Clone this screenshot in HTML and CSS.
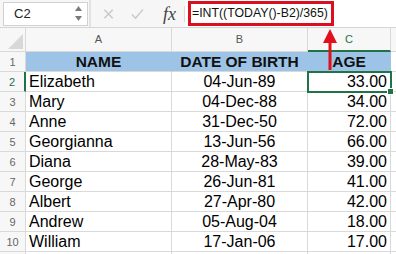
FILE: index.html
```html
<!DOCTYPE html>
<html lang="en">
<head>
  <meta charset="UTF-8" />
  <title>Age formula</title>
  <link rel="stylesheet" href="styles.css">
</head>
<body>
  <div class="app">
    <div class="toolbar">
      <div class="namebox">
        <span class="cellref">C2</span>
        <svg class="spin" width="9" height="17" viewBox="0 0 9 17">
          <path d="M4.5 1 L8 6 L1 6 Z" fill="#7a7a7a"/>
          <path d="M4.5 16 L8 11 L1 11 Z" fill="#7a7a7a"/>
        </svg>
      </div>
      <div class="splitter"></div>
      <div class="tools">
        <svg class="tool" width="12" height="12" viewBox="0 0 12 12">
          <path d="M1.5 1.5 L10.5 10.5 M10.5 1.5 L1.5 10.5" stroke="#c9c9c9" stroke-width="1.6" fill="none"/>
        </svg>
        <svg class="tool" width="14" height="12" viewBox="0 0 14 12">
          <path d="M1 6.5 L5 10.5 L13 1" stroke="#c9c9c9" stroke-width="1.6" fill="none"/>
        </svg>
        <span class="fx">fx</span>
      </div>
      <div class="formula">
        <span class="formula-box">=INT((TODAY()-B2)/365)</span>
      </div>
    </div>

    <div class="sheet">
      <div class="corner"><span class="tri"></span></div>
      <div class="colhead">A</div>
      <div class="colhead">B</div>
      <div class="colhead active">C</div>
      <div class="colhead"></div>

      <div class="rowhead">1</div>
      <div class="cell title">NAME</div>
      <div class="cell title">DATE OF BIRTH</div>
      <div class="cell title">AGE</div>
      <div class="cell"></div>

      <div class="rowhead active">2</div>
      <div class="cell">Elizabeth</div>
      <div class="cell date">04-Jun-89</div>
      <div class="cell num selected">33.00</div>
      <div class="cell"></div>

      <div class="rowhead">3</div>
      <div class="cell">Mary</div>
      <div class="cell date">04-Dec-88</div>
      <div class="cell num">34.00</div>
      <div class="cell"></div>

      <div class="rowhead">4</div>
      <div class="cell">Anne</div>
      <div class="cell date">31-Dec-50</div>
      <div class="cell num">72.00</div>
      <div class="cell"></div>

      <div class="rowhead">5</div>
      <div class="cell">Georgianna</div>
      <div class="cell date">13-Jun-56</div>
      <div class="cell num">66.00</div>
      <div class="cell"></div>

      <div class="rowhead">6</div>
      <div class="cell">Diana</div>
      <div class="cell date">28-May-83</div>
      <div class="cell num">39.00</div>
      <div class="cell"></div>

      <div class="rowhead">7</div>
      <div class="cell">George</div>
      <div class="cell date">26-Jun-81</div>
      <div class="cell num">41.00</div>
      <div class="cell"></div>

      <div class="rowhead">8</div>
      <div class="cell">Albert</div>
      <div class="cell date">27-Apr-80</div>
      <div class="cell num">42.00</div>
      <div class="cell"></div>

      <div class="rowhead">9</div>
      <div class="cell">Andrew</div>
      <div class="cell date">05-Aug-04</div>
      <div class="cell num">18.00</div>
      <div class="cell"></div>

      <div class="rowhead">10</div>
      <div class="cell">William</div>
      <div class="cell date">17-Jan-06</div>
      <div class="cell num">17.00</div>
      <div class="cell"></div>

      <div class="rowhead"></div>
      <div class="cell"></div>
      <div class="cell"></div>
      <div class="cell"></div>
      <div class="cell"></div>
    </div>

    <svg class="arrow" width="16" height="44" viewBox="0 0 16 44">
      <path d="M8 1 L15 15 L1 15 Z" fill="#e0101c"/>
      <rect x="6.5" y="14" width="3" height="28" fill="#e0101c"/>
    </svg>
  </div>
</body>
</html>
```

FILE: styles.css
```css
body {
  margin: 0;
  font-family: "Liberation Sans", Arial, sans-serif;
  background: #fff;
  overflow: hidden;
}
.app {
  position: relative;
  width: 396px;
  height: 254px;
  overflow: hidden;
}
.toolbar {
  display: flex;
  align-items: center;
  height: 27px;
  border-bottom: 1px solid #d6d6d6;
  background: #f6f6f6;
}
.namebox {
  display: flex;
  align-items: center;
  justify-content: space-between;
  box-sizing: border-box;
  width: 85px;
  height: 24px;
  margin-left: 3px;
  padding: 0 4px 0 10px;
  background: #fff;
  border: 1px solid #d2d2d2;
}
.cellref {
  font-size: 13px;
  color: #222;
}
.splitter {
  width: 9px;
  height: 27px;
  box-sizing: border-box;
  border-left: 2px solid #e2e2e2;
  margin-left: 1px;
}
.tools {
  display: flex;
  align-items: center;
  width: 88px;
  height: 27px;
  box-sizing: border-box;
  padding-left: 5px;
  border-right: 1px solid #fff;
}
.tool {
  margin-right: 17px;
}
.tool + .tool {
  margin-right: 19px;
}
.fx {
  font-family: "Liberation Serif", "Times New Roman", serif;
  font-style: italic;
  font-size: 18px;
  color: #444;
  padding-right: 8px;
  border-right: 1px solid #dcdcdc;
  line-height: 16px;
}
.formula {
  flex: 1;
  display: flex;
  align-items: center;
  height: 27px;
  padding-left: 2px;
  background: #fff;
}
.formula-box {
  box-sizing: border-box;
  width: 146px;
  height: 25px;
  padding-left: 1px;
  border: 3px solid #d8101f;
  font-size: 12.3px;
  line-height: 19px;
  color: #111;
  white-space: nowrap;
}
.sheet {
  display: grid;
  grid-template-columns: 26px 146px 136px 83px 1fr;
  grid-auto-rows: 20px;
  grid-template-rows: 24px;
}
.sheet > div {
  box-sizing: border-box;
  border-right: 1px solid #d9d9d9;
  border-bottom: 1px solid #d9d9d9;
}
.corner {
  position: relative;
  background: #f7f7f7;
}
.tri {
  position: absolute;
  right: 2px;
  bottom: 2px;
  width: 0;
  height: 0;
  border-left: 15px solid transparent;
  border-bottom: 15px solid #d8d8d8;
}
.colhead {
  background: #f7f7f7;
  font-size: 11px;
  color: #555;
  text-align: center;
  line-height: 23px;
}
.colhead.active {
  color: #217346;
  border-bottom: 2px solid #217346 !important;
  line-height: 22px;
}
.rowhead {
  background: #f7f7f7;
  font-size: 11px;
  color: #666;
  text-align: center;
  line-height: 20px;
}
.rowhead.active {
  color: #217346;
  border-right: 2px solid #217346 !important;
}
.cell {
  font-size: 16px;
  line-height: 20px;
  padding: 0 3px;
  color: #000;
  white-space: nowrap;
}
.cell.title {
  background: #9dc3e6;
  border-right-color: #9dc3e6 !important;
  font-weight: bold;
  font-size: 15.5px;
  text-align: center;
  color: #111;
}
.cell.date {
  text-align: center;
}
.cell.num {
  text-align: right;
}
.cell.selected {
  position: relative;
  outline: 2px solid #217346;
  outline-offset: -1px;
}
.cell.selected::after {
  content: "";
  position: absolute;
  right: -4px;
  bottom: -4px;
  width: 5px;
  height: 5px;
  background: #217346;
  border: 1px solid #fff;
}
.arrow {
  position: absolute;
  left: 322px;
  top: 28px;
}
```
